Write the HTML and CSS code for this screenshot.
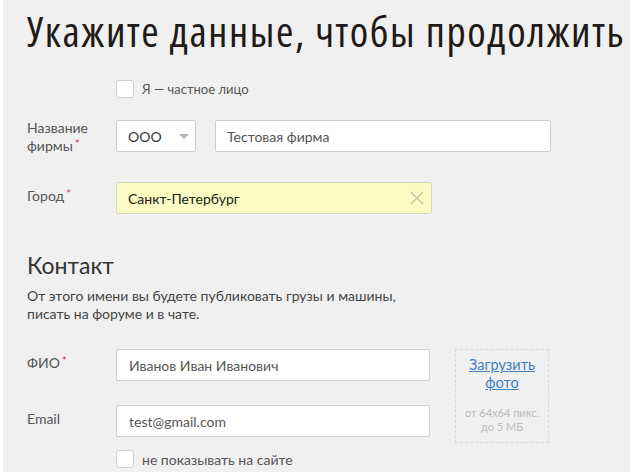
FILE: index.html
```html
<!DOCTYPE html>
<html lang="ru">
<head>
<meta charset="utf-8">
<link rel="stylesheet" href="styles.css">
</head>
<body>
<div class="page">
  <h1 class="title">Укажите данные, чтобы продолжить</h1>

  <div class="row row-check-top">
    <div class="label"></div>
    <label class="check"><span class="box"></span><span class="check-text">Я — частное лицо</span></label>
  </div>

  <div class="row row-firm">
    <div class="label">Название<br>фирмы<span class="req">*</span></div>
    <div class="fields">
      <div class="select"><span>ООО</span><span class="arrow"></span></div>
      <div class="input input-firm">Тестовая фирма</div>
    </div>
  </div>

  <div class="row row-city">
    <div class="label">Город<span class="req">*</span></div>
    <div class="input input-city">
      <span>Санкт-Петербург</span>
      <svg class="clear" width="14" height="14" viewBox="0 0 14 14"><path d="M1 1L13 13M13 1L1 13" stroke="#c9c9a6" stroke-width="1.6" fill="none"/></svg>
    </div>
  </div>

  <h2 class="section">Контакт</h2>
  <p class="desc">От этого имени вы будете публиковать грузы и машины,<br>писать на форуме и в чате.</p>

  <div class="contact">
    <div class="contact-fields">
      <div class="row row-fio">
        <div class="label">ФИО<span class="req">*</span></div>
        <div class="input input-wide">Иванов Иван Иванович</div>
      </div>
      <div class="row row-email">
        <div class="label">Email</div>
        <div class="input input-wide">test@gmail.com</div>
      </div>
      <div class="row row-check-bottom">
        <div class="label"></div>
        <label class="check"><span class="box"></span><span class="check-text">не показывать на сайте</span></label>
      </div>
    </div>
    <div class="upload">
      <a class="upload-link" href="#">Загрузить<br>фото</a>
      <div class="upload-hint">от 64x64 пикс.<br>до 5 МБ</div>
    </div>
  </div>
</div>
</body>
</html>
```
FILE: styles.css
```css
* { box-sizing: border-box; }
html, body { margin: 0; padding: 0; background: #fff; }
body { font-family: Lato, "Open Sans", sans-serif; color: #555; }

.page {
  margin-left: 3px;
  width: 627px;
  height: 472px;
  background: #f0f0f0;
  padding: 0 0 0 24px;
  overflow: hidden;
}

.title {
  margin: 0;
  padding-top: 7px;
  font-family: "Open Sans", Lato, sans-serif;
  font-stretch: 75%;
  font-size: 42px;
  letter-spacing: 1.6px;
  line-height: 48px;
  font-weight: 400;
  color: #1f1a17;
  white-space: nowrap;
}

.row { display: flex; align-items: flex-start; }
.label {
  width: 89px;
  flex: none;
  font-size: 14px;
  line-height: 18px;
  color: #555;
}
.req { color: #d0455a; font-size: 12px; line-height: 0; vertical-align: 3px; margin-left: 2px; }

.row-check-top { margin-top: 25px; }
.check { display: flex; align-items: center; cursor: pointer; }
.box {
  width: 18px; height: 18px;
  background: #fff;
  border: 1px solid #cfcfcf;
  border-radius: 3px;
  flex: none;
}
.check-text { margin-left: 8px; font-size: 13px; color: #555; }
.row-check-bottom .check-text { font-size: 14px; color: #555; }

.row-firm { margin-top: 22px; }
.row-firm .label { margin-top: -1px; }
.fields { display: flex; gap: 19px; }

.input, .select {
  height: 32px;
  background: #fff;
  border: 1px solid #cdcdcd;
  border-radius: 2px;
  font-size: 14px;
  color: #555;
  display: flex;
  align-items: center;
  padding: 0 11px;
}
.select { width: 80px; justify-content: space-between; color: #333; padding-right: 6px; }
.arrow {
  width: 0; height: 0;
  border-left: 5px solid transparent;
  border-right: 5px solid transparent;
  border-top: 5px solid #b5b5b5;
}
.input-firm { width: 336px; }

.row-city { margin-top: 27px; }
.row-city .label { padding-top: 5px; }
.input-city {
  width: 316px;
  background: #fbfcc3;
  border-color: #d6d6c0;
  color: #222;
  justify-content: space-between;
  padding-right: 7px;
}

.section {
  margin: 37px 0 0;
  font-size: 23px;
  line-height: 28px;
  font-weight: 400;
  color: #333;
}
.desc {
  margin: 8px 0 0;
  font-size: 14px;
  line-height: 18px;
  color: #444;
}

.contact { display: flex; margin-top: 26px; }
.contact-fields { width: 403px; }
.input-wide { width: 314px; padding-left: 12px; }
.row-fio .label, .row-email .label { padding-top: 5px; }
.row-email { margin-top: 24px; }
.row-check-bottom { margin-top: 13px; }

.upload {
  margin-left: 25px;
  width: 94px;
  height: 94px;
  border: 1px dashed #d8d8d8;
  text-align: center;
  padding-top: 6px;
}
.upload-link {
  display: block;
  font-size: 14.5px;
  line-height: 18px;
  color: #3f7fc4;
  text-decoration: underline;
}
.upload-hint {
  margin-top: 14px;
  font-size: 11px;
  line-height: 14px;
  color: #bcbcbc;
}
```
